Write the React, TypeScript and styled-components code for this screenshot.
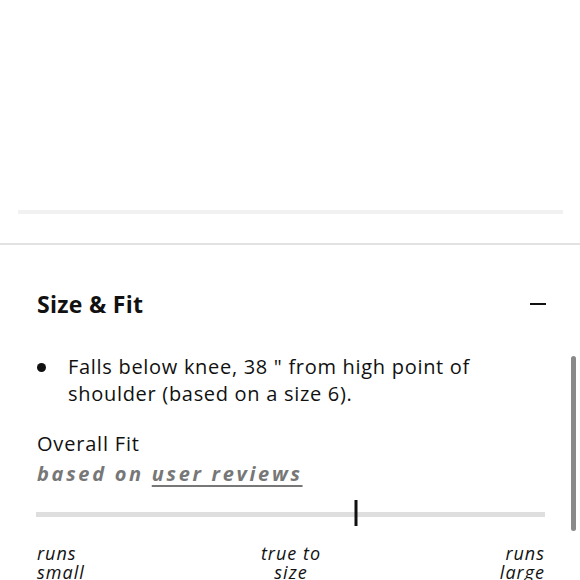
import styled, { createGlobalStyle } from "styled-components";

const GlobalStyle = createGlobalStyle`
  html, body {
    margin: 0;
    padding: 0;
    background: #ffffff;
    font-family: "Open Sans", "Noto Sans", sans-serif;
    color: #111111;
    overflow: hidden;
  }
`;

const Page = styled.div`
  position: relative;
  width: 580px;
  height: 580px;
  overflow: hidden;
`;

const TopSpace = styled.div`
  height: 210px;
`;

const SoftRule = styled.div`
  height: 4px;
  margin: 0 17px 0 18px;
  background: #f1f1f1;
`;

const HardRule = styled.div`
  height: 2px;
  margin-top: 29px;
  background: #e2e2e2;
`;

const Section = styled.section`
  padding: 42px 35px 0 37px;
`;

const Header = styled.div`
  display: flex;
  align-items: center;
  justify-content: space-between;
  height: 34px;
`;

const Title = styled.h2`
  margin: 0;
  font-size: 23px;
  line-height: 34px;
  font-weight: 700;
  letter-spacing: 0.3px;
`;

const Minus = styled.span`
  width: 16px;
  height: 2px;
  margin-right: -1px;
  background: #111111;
`;

const Bullets = styled.ul`
  margin: 32px 0 0;
  padding: 0;
  list-style: none;
`;

const Bullet = styled.li`
  position: relative;
  padding-left: 31px;
  font-size: 20px;
  line-height: 27px;
  letter-spacing: 0.7px;
  &::before {
    content: "";
    position: absolute;
    left: 0;
    top: 10px;
    width: 9px;
    height: 9px;
    border-radius: 50%;
    background: #111111;
  }
`;

const FitLabel = styled.div`
  margin-top: 23px;
  font-size: 20px;
  line-height: 27px;
  letter-spacing: 0.8px;
`;

const Source = styled.div`
  margin-top: 2px;
  font-size: 20px;
  line-height: 30px;
  font-weight: 700;
  font-style: italic;
  color: #777777;
  letter-spacing: 2.7px;
  a {
    color: inherit;
    text-decoration: underline;
    text-underline-offset: 4px;
    text-decoration-thickness: 1.5px;
  }
`;

const Track = styled.div`
  position: relative;
  height: 5px;
  margin: 23px 0 0 -1px;
  width: 509px;
  background: #dedede;
`;

const Marker = styled.div`
  position: absolute;
  top: -12px;
  width: 3px;
  height: 26px;
  background: #111111;
  transform: translateX(-50%);
`;

const Scale = styled.div`
  display: grid;
  grid-template-columns: 1fr auto 1fr;
  width: 508px;
  margin-top: 27px;
`;

const ScaleLabel = styled.div<{ $align: "left" | "center" | "right" }>`
  font-size: 18px;
  line-height: 19px;
  font-style: italic;
  letter-spacing: 1px;
  text-align: ${(p) => p.$align};
`;

const ScrollThumb = styled.div`
  position: absolute;
  right: 4px;
  top: 356px;
  width: 5px;
  height: 175px;
  border-radius: 3px;
  background: #8a8a8a;
`;

export default function App() {
  const fit = 0.628;
  return (
    <Page>
      <GlobalStyle />
      <TopSpace />
      <SoftRule />
      <HardRule />
      <Section>
        <Header>
          <Title>Size &amp; Fit</Title>
          <Minus />
        </Header>
        <Bullets>
          <Bullet>
            Falls below knee, 38 " from high point of shoulder (based on a size 6).
          </Bullet>
        </Bullets>
        <FitLabel>Overall Fit</FitLabel>
        <Source>
          based on <a href="#reviews">user reviews</a>
        </Source>
        <Track>
          <Marker style={{ left: `${fit * 100}%` }} />
        </Track>
        <Scale>
          <ScaleLabel $align="left">
            runs
            <br />
            small
          </ScaleLabel>
          <ScaleLabel $align="center">
            true to
            <br />
            size
          </ScaleLabel>
          <ScaleLabel $align="right">
            runs
            <br />
            large
          </ScaleLabel>
        </Scale>
      </Section>
      <ScrollThumb />
    </Page>
  );
}
